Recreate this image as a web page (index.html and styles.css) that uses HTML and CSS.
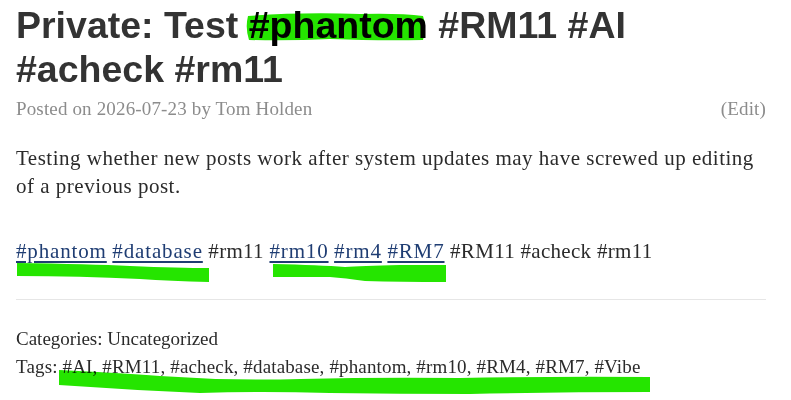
FILE: index.html
```html
<!DOCTYPE html>
<html lang="en">
<head>
<meta charset="utf-8">
<title>Private: Test #phantom</title>
<link rel="stylesheet" href="styles.css">
</head>
<body>
<article class="post">
  <header class="post-header">
    <h1 class="post-title">Private: Test <span class="marked">#phantom</span> #RM11 #AI #acheck #rm11</h1>
    <div class="post-meta">
      <span class="posted">Posted on <a href="#" class="meta-link">2026-07-23</a> by <a href="#" class="meta-link">Tom Holden</a></span>
      <a href="#" class="meta-link edit">(Edit)</a>
    </div>
  </header>
  <div class="post-content">
    <p class="intro">Testing whether new posts work after system updates may have screwed up editing of a previous post.</p>
    <p class="hashtags"><a href="#" class="tag-link">#phantom</a> <a href="#" class="tag-link">#database</a> #rm11 <a href="#" class="tag-link">#rm10</a> <a href="#" class="tag-link">#rm4</a> <a href="#" class="tag-link">#RM7</a> #RM11 #acheck #rm11</p>
  </div>
  <footer class="post-footer">
    <div class="footer-line">Categories: Uncategorized</div>
    <div class="footer-line tags">Tags: #AI, #RM11, #acheck, #database, #phantom, #rm10, #RM4, #RM7, #Vibe</div>
  </footer>
  <svg class="marks" width="791" height="400" viewBox="0 0 791 400" aria-hidden="true">
    <path d="M248 16 Q300 12 360 14 Q400 13 423 16 Q427 27 423 40 Q380 41 330 39 Q290 41 249 40 Q245 28 248 16 Z"/>
    <path d="M17 263 Q90 264 130 266 Q180 268 209 268 L209 282 Q170 281 140 279 Q80 276 17 276 Z"/>
    <path d="M273 264 Q320 265 345 267 Q360 266 400 265 L446 265 L446 282 Q400 282 365 281 Q345 278 330 277 L273 277 Z"/>
    <path d="M59 370 Q120 373 160 376 Q230 381 300 379 Q380 377 460 378 Q560 376 650 377 L650 392 Q560 392 470 394 Q400 394 330 393 Q260 391 200 393 Q130 390 59 385 Z"/>
  </svg>
</article>
</body>
</html>
```

FILE: styles.css
```css
html, body {
  margin: 0;
  padding: 0;
  background: #ffffff;
}

.post {
  position: relative;
  box-sizing: border-box;
  width: 791px;
  min-height: 400px;
  padding: 0 25px 0 16px;
  font-family: "Liberation Serif", "Times New Roman", serif;
  color: #2b2b2b;
}

.post-title {
  margin: 0;
  padding-top: 3px;
  font-family: "Liberation Sans", Arial, sans-serif;
  font-weight: 700;
  font-size: 37.5px;
  line-height: 44px;
  color: #333333;
}

.marked {
  color: #000000;
}

.post-meta {
  display: flex;
  justify-content: space-between;
  margin-top: 6px;
  font-size: 19px;
  line-height: 24px;
  letter-spacing: 0.15px;
  color: #8c8c8c;
}

.meta-link {
  color: #8c8c8c;
  text-decoration: none;
}

.post-content {
  margin-top: 23px;
  font-size: 21px;
  line-height: 28px;
}

.post-content p {
  margin: 0;
}

.post-content .intro {
  letter-spacing: 0.5px;
}

.post-content .hashtags {
  margin-top: 37px;
  letter-spacing: 0.3px;
}

.tag-link {
  color: #1f3d73;
  letter-spacing: 0.85px;
  text-decoration: underline;
  text-underline-offset: 3px;
}

.post-footer {
  margin-top: 34px;
  border-top: 1px solid #e6e6e6;
  padding-top: 25px;
  font-size: 19px;
  line-height: 28px;
}

.footer-line.tags {
  letter-spacing: 0.15px;
}

.marks {
  position: absolute;
  left: 0;
  top: 0;
  fill: #25e500;
  mix-blend-mode: multiply;
  pointer-events: none;
}
```
